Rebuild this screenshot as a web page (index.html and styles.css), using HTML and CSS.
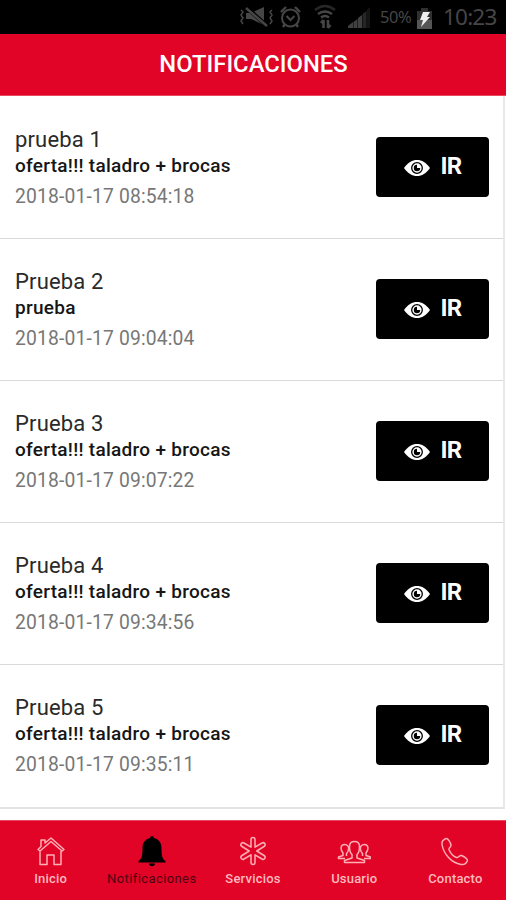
FILE: index.html
```html
<!DOCTYPE html>
<html lang="es">
<head>
<meta charset="utf-8">
<title>Notificaciones</title>
<link rel="stylesheet" href="styles.css">
</head>
<body>
<svg class="defs" aria-hidden="true">
  <symbol id="eye" viewBox="0 0 26 18">
    <path fill="#fff" d="M0 9C4 3.600 8 1 13 1s9 2.600 13 8c-4 5.400-8 8-13 8S4 14.400 0 9z"/>
    <circle cx="13" cy="9" r="5.300" fill="#fff" stroke="#000" stroke-width="1.300"/>
    <path d="M13 5.800a3.200 3.200 0 1 0 3.200 3.200H13z"/>
  </symbol>
</svg>
<div class="status">
  <svg class="status-icons" width="144" height="34" viewBox="0 0 144 34" fill="none" stroke="#464646">
    <g stroke-width="1.500">
      <path d="M3 10l2 2-2 3 2 3-2 3 2 3M34 10l-2 2 2 3-2 3 2 3-2 3"/>
      <path d="M8 13h5l13-6v18l-13-6H8z" fill="#464646" stroke="none"/>
      <path d="M8 7l20 18" stroke="#000" stroke-width="4"/>
      <path d="M8 8l21 18" stroke-width="2.400"/>
    </g>
    <circle cx="52.500" cy="18" r="8.500" stroke-width="2"/>
    <path d="M43 12l5-5M57 7l5 5M47 24l-2 3M58 24l2 3" stroke-width="2.400"/>
    <path d="M48.500 16l4 4 4-4" stroke-width="2"/>
    <path d="M77 10q10-8 20 0" stroke="#272727" stroke-width="2.400"/>
    <path d="M80 14q7-5 14 0M83 17.500q4-3 8 0" stroke-width="2.400"/>
    <path d="M85.500 28v-8M83 23l2.500-3M90 20v8M92.500 25l-2.500 3" stroke-width="2.600"/>
    <path d="M110 28V26l5-4v6zM115.500 28v-6l4-3v9zM120 28V18l4-3v13z" fill="#404040" stroke="none"/>
    <path d="M124.500 28V14l4-3v17z" fill="#262626" stroke="none"/><path d="M129 28V10l3-3v21z" fill="#151515" stroke="none"/>
  </svg>
  <span class="percent">50%</span>
  <svg class="battery" width="15" height="21" viewBox="0 0 15 21"><path fill="#303030" d="M4 0h7v3h4v18H0V3h4z"/><path fill="#555" d="M0 12h15v9H0z"/><path fill="#eee" d="M6 4h7l-3 5h3L4 19l2-7H3z"/></svg>
  <time class="clock">10:23</time>
</div>
<header class="header"><h1>NOTIFICACIONES</h1></header>
<main class="list">
  <article class="item"><div class="copy"><h2 class="name">prueba 1</h2><p class="message">oferta!!! taladro + brocas</p><time class="date">2018-01-17 08:54:18</time></div><button class="go"><svg class="eye"><use href="#eye"/></svg><span>IR</span></button></article>
  <article class="item"><div class="copy"><h2 class="name">Prueba 2</h2><p class="message">prueba</p><time class="date">2018-01-17 09:04:04</time></div><button class="go"><svg class="eye"><use href="#eye"/></svg><span>IR</span></button></article>
  <article class="item"><div class="copy"><h2 class="name">Prueba 3</h2><p class="message">oferta!!! taladro + brocas</p><time class="date">2018-01-17 09:07:22</time></div><button class="go"><svg class="eye"><use href="#eye"/></svg><span>IR</span></button></article>
  <article class="item"><div class="copy"><h2 class="name">Prueba 4</h2><p class="message">oferta!!! taladro + brocas</p><time class="date">2018-01-17 09:34:56</time></div><button class="go"><svg class="eye"><use href="#eye"/></svg><span>IR</span></button></article>
  <article class="item"><div class="copy"><h2 class="name">Prueba 5</h2><p class="message">oferta!!! taladro + brocas</p><time class="date">2018-01-17 09:35:11</time></div><button class="go"><svg class="eye"><use href="#eye"/></svg><span>IR</span></button></article>
</main>
<nav class="tabs">
  <a class="tab"><svg viewBox="0 0 30 32"><path d="M2 14.500l2 1.500L15 6.500 26 16l2-1.500L15 3 9 8V5H5v6.500zM4 16v13.500h7V20h7v9.500h7V16"/></svg><span>Inicio</span></a>
  <a class="tab active"><svg viewBox="0 0 30 32"><path d="M15 1c1.100 0 1.800.8 1.800 2 5 1 7.700 4.700 7.700 10 0 8 .8 11 4 13v1.500H1.500V26c3.200-2 4-5 4-13 0-5.300 2.700-9 7.700-10 0-1.200.7-2 1.800-2zM12 28.500h6c0 3.500-6 3.500-6 0z"/></svg><span>Notificaciones</span></a>
  <a class="tab"><svg viewBox="0 0 30 32"><path d="M13 4.500q0-2 2-2t2 2V12.200l7-4.200q1.800-1 2.800.7t-.8 2.800L18.800 16l7.200 4.500q1.800 1.100.8 2.800t-2.800.7l-7-4.200v7.700q0 2-2 2t-2-2v-7.700L6 24q-1.800 1-2.800-.7t.8-2.800L11.200 16 4 11.500q-1.800-1.100-.8-2.800T6 8l7 4.200z"/></svg><span>Servicios</span></a>
  <a class="tab"><svg class="people" viewBox="0 0 34 32"><path d="M7.500 27.500h20v-2l-7.500-2.500v-3.500c2-1.500 2.500-3.500 2.500-8 0-3.500-2-5-5-5s-5 1.500-5 5c0 4.500.5 6.500 2.500 8V23l-7.500 2.500zM8 23.500H1.500V22l4.500-1.500V18c-3-3.500-2.500-8.500 1.500-8.500 3 0 4.500 2 4 5-.3 2-1 3-2 4v2.500M27 23.500h6.500V22L29 20.500V18c3-3.500 2.500-8.500-1.500-8.500-3 0-4.500 2-4 5 .3 2 1 3 2 4v2.500"/></svg><span>Usuario</span></a>
  <a class="tab"><svg viewBox="0 0 30 32"><path d="M6 3.500C3.500 4.500 1.500 6.500 2 9.500c1.500 9 9 18.500 19 20 3 .5 5.500-1.500 6.500-4 .5-1.500-3.500-4-6-5-2-.8-3 2.500-5 2-3-1-6.500-4.500-7.500-8-.5-2 2.500-2.500 2-4.500-.6-2.500-3-7-5-6.500z"/></svg><span>Contacto</span></a>
</nav>
</body>
</html>
```

FILE: styles.css
```css
* { box-sizing: border-box; }
body { margin: 0; width: 506px; height: 900px; display: flex; flex-direction: column; background: #fff; font-family: Roboto, sans-serif; overflow: hidden; }
h1, h2, p { margin: 0; font-weight: 400; }
.defs { display: none; }
.status { height: 34px; background: #000; color: #464646; display: flex; align-items: center; justify-content: flex-end; padding-right: 9px; }
.status-icons { flex: none; margin-right: -2px; }
.percent { font: 16.500px/36px "Noto Sans", sans-serif; width: 35px; letter-spacing: -.4px; }
.battery { margin: 2px 11px 0 2px; flex: none; }
.clock { font: 22.500px/38px "Noto Sans", sans-serif; width: 54px; letter-spacing: -.8px; white-space: nowrap; }
.header { height: 62px; background: #e20427; display: flex; align-items: center; justify-content: center; border-bottom: 1px solid #e94a60; }
.header h1 { color: #fff; font-size: 23.800px; line-height: 28px; font-weight: 500; padding: 0 0 2px 1px; }
.list { width: 505px; height: 713px; border-right: 2px solid #e8e8e8; border-bottom: 2px solid #e3e3e3; padding-top: 1px; }
.item { height: 142px; border-bottom: 1px solid #d9d9d9; display: flex; justify-content: space-between; padding: 29px 14px 0 15px; }
.item:last-child { border: 0; }
.copy { display: flex; flex-direction: column; white-space: nowrap; }
.name { font-size: 22px; line-height: 28px; color: #2a2a2a; letter-spacing: .15px; }
.message { font-size: 19px; line-height: 24px; font-weight: 500; color: #161616; letter-spacing: .28px; }
.date { font-size: 19.300px; line-height: 24px; color: #777; margin-top: 7px; letter-spacing: .16px; }
.go { width: 113px; height: 60px; margin: 11px 0 0; padding: 0; border: 0; border-radius: 4px; background: #000; color: #fff; display: flex; align-items: center; justify-content: center; gap: 11px; font: 700 24px/28px Roboto, sans-serif; }
.go span { padding-bottom: 2px; letter-spacing: -.6px; }
.eye { width: 26px; height: 18px; margin: 2px -1px 0 1px; }
.tabs { height: 80px; margin-top: 11px; background: #e20427; border-top: 1px solid #e94a60; display: grid; grid-template-columns: repeat(5, 1fr); }
.tab { display: flex; flex-direction: column; align-items: center; padding-top: 14px; color: #ffb9be; font-size: 13px; line-height: 18px; font-weight: 500; letter-spacing: .2px; }
.tab svg { width: 30px; height: 32px; fill: none; stroke: #ffafb5; stroke-width: 1.500; stroke-linejoin: round; }
.tab .people { width: 34px; }
.tab span { margin-top: 3px; }
.active { color: #500010; font-weight: 400; letter-spacing: .4px; }
.tab.active svg { fill: #000; stroke: none; }
```
